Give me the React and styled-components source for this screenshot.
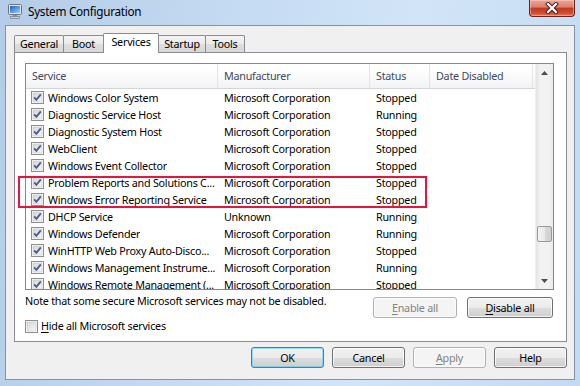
import React from 'react';
import styled, { createGlobalStyle } from 'styled-components';

const GlobalStyle = createGlobalStyle`
  html, body { margin: 0; padding: 0; }
  body {
    font-family: "Noto Sans", "DejaVu Sans", sans-serif;
    font-size: 10.75px;
    letter-spacing: -0.24px;
    color: #000;
  }
`;

const services = [
    ['Windows Color System', 'Microsoft Corporation', 'Stopped'],
    ['Diagnostic Service Host', 'Microsoft Corporation', 'Running'],
    ['Diagnostic System Host', 'Microsoft Corporation', 'Stopped'],
    ['WebClient', 'Microsoft Corporation', 'Stopped'],
    ['Windows Event Collector', 'Microsoft Corporation', 'Stopped'],
    ['Problem Reports and Solutions C...', 'Microsoft Corporation', 'Stopped'],
    ['Windows Error Reporting Service', 'Microsoft Corporation', 'Stopped'],
    ['DHCP Service', 'Unknown', 'Running'],
    ['Windows Defender', 'Microsoft Corporation', 'Running'],
    ['WinHTTP Web Proxy Auto-Disco...', 'Microsoft Corporation', 'Stopped'],
    ['Windows Management Instrume...', 'Microsoft Corporation', 'Running'],
    ['Windows Remote Management (...', 'Microsoft Corporation', 'Stopped'],
];

const tabs = [
    { label: 'General', width: 50 },
    { label: 'Boot', width: 41 },
    { label: 'Services', width: 56, active: true },
    { label: 'Startup', width: 48 },
    { label: 'Tools', width: 40 },
];

const columns = ['Service', 'Manufacturer', 'Status', 'Date Disabled'];

const TRACK = 191;
const THUMB = 16;
const scrollPos = 0.83;

const Check = ({ checked }) => (
    <CheckBox>
        <svg width="13" height="13" viewBox="0 0 13 13">
            <defs>
                <linearGradient id="cbfill" x1="0" y1="0" x2="1" y2="1">
                    <stop offset="0" stopColor="#d5d5d5" />
                    <stop offset="1" stopColor="#f9f9f9" />
                </linearGradient>
            </defs>
            <rect x="0.5" y="0.5" width="12" height="12" fill="#fff" stroke="#8e8f8f" />
            <rect x="2" y="2" width="9" height="9" fill="url(#cbfill)" stroke="#c4c4c4" strokeWidth="0.6" />
            {checked && (
                <path d="M3.2 6.4 L5.4 8.8 L9.8 3.4" fill="none" stroke="#4a5d92" strokeWidth="1.9" />
            )}
        </svg>
    </CheckBox>
);

const App = () => {
    return (
        <>
            <GlobalStyle />
            <Window>
                <TitleBar>
                    <svg width="16" height="16" viewBox="0 0 16 16">
                        <defs>
                            <linearGradient id="scr" x1="0" y1="0" x2="1" y2="1">
                                <stop offset="0" stopColor="#1f5fc8" />
                                <stop offset="1" stopColor="#9fd0f7" />
                            </linearGradient>
                        </defs>
                        <rect x="1.5" y="1.5" width="13" height="10" rx="1" fill="#e4e7ec" stroke="#6d7480" />
                        <rect x="3" y="3" width="10" height="7" fill="url(#scr)" />
                        <rect x="6" y="12" width="4" height="2" fill="#8a909a" />
                        <rect x="3.5" y="13.5" width="9" height="2" fill="#c9ced6" stroke="#6d7480" strokeWidth="0.6" />
                    </svg>
                    <Title>System Configuration</Title>
                    <CloseButton>
                        <svg width="14" height="12" viewBox="0 0 14 12">
                            <path d="M3 2 L11 10 M11 2 L3 10" stroke="#3a1a14" strokeWidth="4" strokeLinecap="square" />
                            <path d="M3 2 L11 10 M11 2 L3 10" stroke="#ffffff" strokeWidth="2.2" strokeLinecap="square" />
                        </svg>
                    </CloseButton>
                </TitleBar>

                <Client>
                    <TabStrip>
                        {tabs.map(t => (
                            <Tab key={t.label} $w={t.width} $active={t.active}>{t.label}</Tab>
                        ))}
                    </TabStrip>

                    <Panel>
                        <ListView>
                            <Table>
                                <HeaderRow>
                                    {columns.map(c => <HeaderCell key={c}>{c}</HeaderCell>)}
                                    <HeaderCell />
                                </HeaderRow>
                                {services.map(([name, maker, status]) => (
                                    <Row key={name}>
                                        <NameCell>
                                            <Check checked />
                                            <CellText>{name}</CellText>
                                        </NameCell>
                                        <Cell>{maker}</Cell>
                                        <Cell>{status}</Cell>
                                        <Cell />
                                    </Row>
                                ))}
                            </Table>
                            <ScrollBar>
                                <ArrowButton>
                                    <svg width="7" height="4" viewBox="0 0 7 4"><path d="M0 4 L3.5 0 L7 4 Z" fill="#4d4d4d" /></svg>
                                </ArrowButton>
                                <Track>
                                    <Thumb style={{ marginTop: Math.round((TRACK - THUMB) * scrollPos) }} />
                                </Track>
                                <ArrowButton>
                                    <svg width="7" height="4" viewBox="0 0 7 4"><path d="M0 0 L7 0 L3.5 4 Z" fill="#4d4d4d" /></svg>
                                </ArrowButton>
                            </ScrollBar>
                        </ListView>

                        <NoteRow>
                            <Note>Note that some secure Microsoft services may not be disabled.</Note>
                            <Button $w={84} disabled><u>E</u>nable all</Button>
                            <Button $w={86}><u>D</u>isable all</Button>
                        </NoteRow>

                        <HideRow>
                            <Check />
                            <span><u>H</u>ide all Microsoft services</span>
                        </HideRow>

                        <Highlight />
                    </Panel>

                    <ButtonRow>
                        <Button $w={73} $default>OK</Button>
                        <Button $w={73}>Cancel</Button>
                        <Button $w={73} disabled><u>A</u>pply</Button>
                        <Button $w={73}>Help</Button>
                    </ButtonRow>
                </Client>
            </Window>
        </>
    );
};

const Window = styled.div`
    width: 580px;
    height: 386px;
    display: flex;
    flex-direction: column;
    overflow: hidden;
    background: linear-gradient(100deg, #b4cce7 0%, #c6dcf3 40%, #d2e5f8 65%, #c3daf2 100%);
`;

const TitleBar = styled.div`
    height: 25px;
    box-sizing: border-box;
    padding: 0 0 3px 7px;
    display: flex;
    align-items: center;
`;

const Title = styled.span`
    margin-left: 5px;
    font-size: 11.75px;
    letter-spacing: -0.3px;
    color: #000;
`;

const CloseButton = styled.div`
    align-self: flex-start;
    margin: 0 5px 0 auto;
    width: 46px;
    height: 17px;
    box-sizing: border-box;
    border: 1px solid #6b2219;
    border-top: none;
    border-radius: 0 0 4px 4px;
    background: linear-gradient(#e9a99b 0%, #dc7c69 45%, #c4381f 50%, #cf4a2f 80%, #e27a5c 100%);
    box-shadow: inset 0 0 0 1px rgba(255, 210, 200, 0.45);
    display: flex;
    align-items: center;
    justify-content: center;
`;

const Client = styled.div`
    flex: 1;
    margin: 0 5px 6px 5px;
    border: 1px solid #8592a3;
    background: #f0f0f0;
    padding: 7px 7px 8px 8px;
    display: flex;
    flex-direction: column;
`;

const TabStrip = styled.div`
    height: 19px;
    display: flex;
    align-items: flex-end;
    position: relative;
    z-index: 1;
`;

const Tab = styled.div`
    width: ${p => p.$w}px;
    height: ${p => (p.$active ? 20 : 17)}px;
    margin-left: -1px;
    margin-bottom: ${p => (p.$active ? -1 : 0)}px;
    padding-bottom: ${p => (p.$active ? 3 : 0)}px;
    box-sizing: border-box;
    border: 1px solid #898c95;
    border-bottom: none;
    border-radius: 2px 2px 0 0;
    position: relative;
    z-index: ${p => (p.$active ? 2 : 1)};
    background: ${p => (p.$active ? '#ffffff' : 'linear-gradient(#f4f4f4, #ebebeb 50%, #dedede 51%, #d8d8d8)')};
    display: flex;
    align-items: center;
    justify-content: center;

    &:first-child { margin-left: 0; }
`;

const Panel = styled.div`
    position: relative;
    height: 290px;
    box-sizing: border-box;
    border: 1px solid #898c95;
    background: #ffffff;
    padding: 10px 12px 9px 10px;
    display: flex;
    flex-direction: column;
`;

const ListView = styled.div`
    height: 227px;
    box-sizing: border-box;
    border: 1px solid #828790;
    background: #fff;
    display: flex;
`;

const Table = styled.div`
    flex: 1;
    overflow: hidden;
`;

const grid = `
    display: grid;
    grid-template-columns: 192px 152px 60px 103px 1fr;
`;

const HeaderRow = styled.div`
    ${grid}
    height: 25px;
    box-sizing: border-box;
    border-bottom: 1px solid #d5d5d5;
    background: linear-gradient(#ffffff 0%, #fbfbfc 50%, #f1f2f4 100%);
`;

const HeaderCell = styled.div`
    display: flex;
    align-items: center;
    padding-left: 6px;
    border-right: 1px solid #e3e4e6;
    color: #3e4a5c;

    &:last-child { border-right: none; padding: 0; }
`;

const Row = styled.div`
    ${grid}
    height: 17px;
    align-items: center;
`;

const NameCell = styled.div`
    display: flex;
    align-items: center;
    gap: 4px;
    padding-left: 5px;
    min-width: 0;
`;

const CellText = styled.span`
    white-space: nowrap;
    overflow: hidden;
`;

const Cell = styled.div`
    padding-left: 6px;
    white-space: nowrap;
    overflow: hidden;
`;

const CheckBox = styled.span`
    width: 13px;
    height: 13px;
    flex: none;
    display: block;

    svg { display: block; }
`;

const ScrollBar = styled.div`
    width: 17px;
    display: flex;
    flex-direction: column;
    background: linear-gradient(to right, #e4e4e4 0%, #f2f2f2 25%, #f2f2f2 75%, #e9e9e9 100%);
    border-left: 1px solid #eeeeee;
`;

const ArrowButton = styled.div`
    height: 17px;
    display: flex;
    align-items: center;
    justify-content: center;

    svg { display: block; }
`;

const Track = styled.div`
    flex: 1;
    display: flex;
    flex-direction: column;
`;

const Thumb = styled.div`
    height: 16px;
    margin: 0 1px;
    box-sizing: border-box;
    border: 1px solid #9a9a9a;
    border-radius: 2px;
    background: linear-gradient(to right, #f4f4f4 0%, #e9e9e9 50%, #d9d9d9 51%, #cfcfcf 100%);
`;

const NoteRow = styled.div`
    display: flex;
    align-items: flex-start;
    gap: 10px;
    margin: 4px 1px 0 0;
`;

const Note = styled.div`
    flex: 1;
    line-height: 15px;
`;

const Button = styled.button`
    width: ${p => p.$w}px;
    height: 21px;
    margin-top: 3px;
    padding: 0;
    box-sizing: border-box;
    font: inherit;
    letter-spacing: inherit;
    border-radius: 3px;
    border: 1px solid ${p => (p.$default ? '#3c7fb1' : '#707070')};
    color: #000;
    background: linear-gradient(#f2f2f2 0%, #ebebeb 50%, #dddddd 51%, #cfcfcf 100%);
    box-shadow: inset 0 0 0 1px ${p => (p.$default ? 'rgba(72, 208, 253, 0.55)' : 'rgba(255, 255, 255, 0.75)')};

    &:disabled {
        border-color: #adb2b5;
        color: #838383;
        background: #f4f4f4;
        box-shadow: inset 0 0 0 1px #fcfcfc;
    }

    u { text-decoration-thickness: 1px; text-underline-offset: 2px; }
`;

const HideRow = styled.label`
    display: flex;
    align-items: center;
    gap: 3px;
    height: 14px;
    margin-top: 1px;

    u { text-underline-offset: 2px; }
`;

const Highlight = styled.div`
    position: absolute;
    left: 3px;
    top: 123px;
    width: 409px;
    height: 32px;
    box-sizing: border-box;
    border: 2px solid #e4163e;
    pointer-events: none;
`;

const ButtonRow = styled.div`
    display: flex;
    justify-content: flex-end;
    gap: 8px;
    margin-top: 5px;

    button { margin-top: 0; }
`;

export default App;
